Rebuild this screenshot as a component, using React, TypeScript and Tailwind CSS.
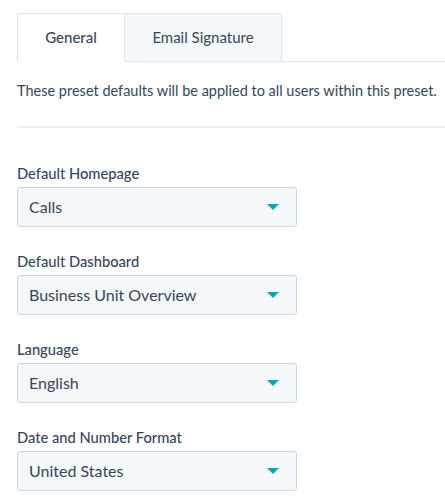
import { useState } from "react";

type SelectProps = {
  label: string;
  value: string;
};

const Field: React.FC<SelectProps> = ({ label, value }) => {
  return (
    <div className="flex flex-col">
      <label className="text-[14.7px] leading-[20px] font-medium text-[#33475b] mb-[4px]">
        {label}
      </label>
      <button className="flex items-center justify-between w-[280px] h-[40px] px-[11px] bg-[#f5f8fa] border border-[#cbd6e2] rounded-[3px] text-left">
        <span className="text-[16px] text-[#33475b]">{value}</span>
        <svg width="12" height="6" viewBox="0 0 12 6" className="mr-[6px]">
          <path d="M0 0 L12 0 L6 6 Z" fill="#00a4bd" />
        </svg>
      </button>
    </div>
  );
};

const App = () => {
  const [tab, setTab] = useState("general");

  return (
    <main className="w-[445px] h-[504px] bg-white overflow-hidden pl-[17px] pt-[13px] font-['Lato',sans-serif] text-[#33475b]">
      <nav className="flex items-end">
        <button
          onClick={() => setTab("general")}
          className={`w-[108px] h-[49px] text-[15px] font-medium border border-[#dfe3eb] rounded-tl-[3px] ${
            tab === "general" ? "bg-white border-b-transparent" : "bg-[#f5f8fa]"
          }`}
        >
          General
        </button>
        <button
          onClick={() => setTab("email")}
          className={`w-[157px] h-[49px] text-[15px] border border-l-0 border-[#dfe3eb] rounded-tr-[3px] ${
            tab === "email" ? "bg-white border-b-transparent" : "bg-[#f5f8fa]"
          }`}
        >
          Email Signature
        </button>
        <div className="flex-1 border-b border-[#dfe3eb]" />
      </nav>
      <p className="text-[14.5px] leading-[20px] mt-[19px]">
        These preset defaults will be applied to all users within this preset.
      </p>
      <hr className="mt-[25px] border-t-2 border-[#eaf0f6]" />
      <section className="flex flex-col gap-[24px] mt-[35px]">
        <Field label="Default Homepage" value="Calls" />
        <Field label="Default Dashboard" value="Business Unit Overview" />
        <Field label="Language" value="English" />
        <Field label="Date and Number Format" value="United States" />
      </section>
    </main>
  );
};

export default App;
